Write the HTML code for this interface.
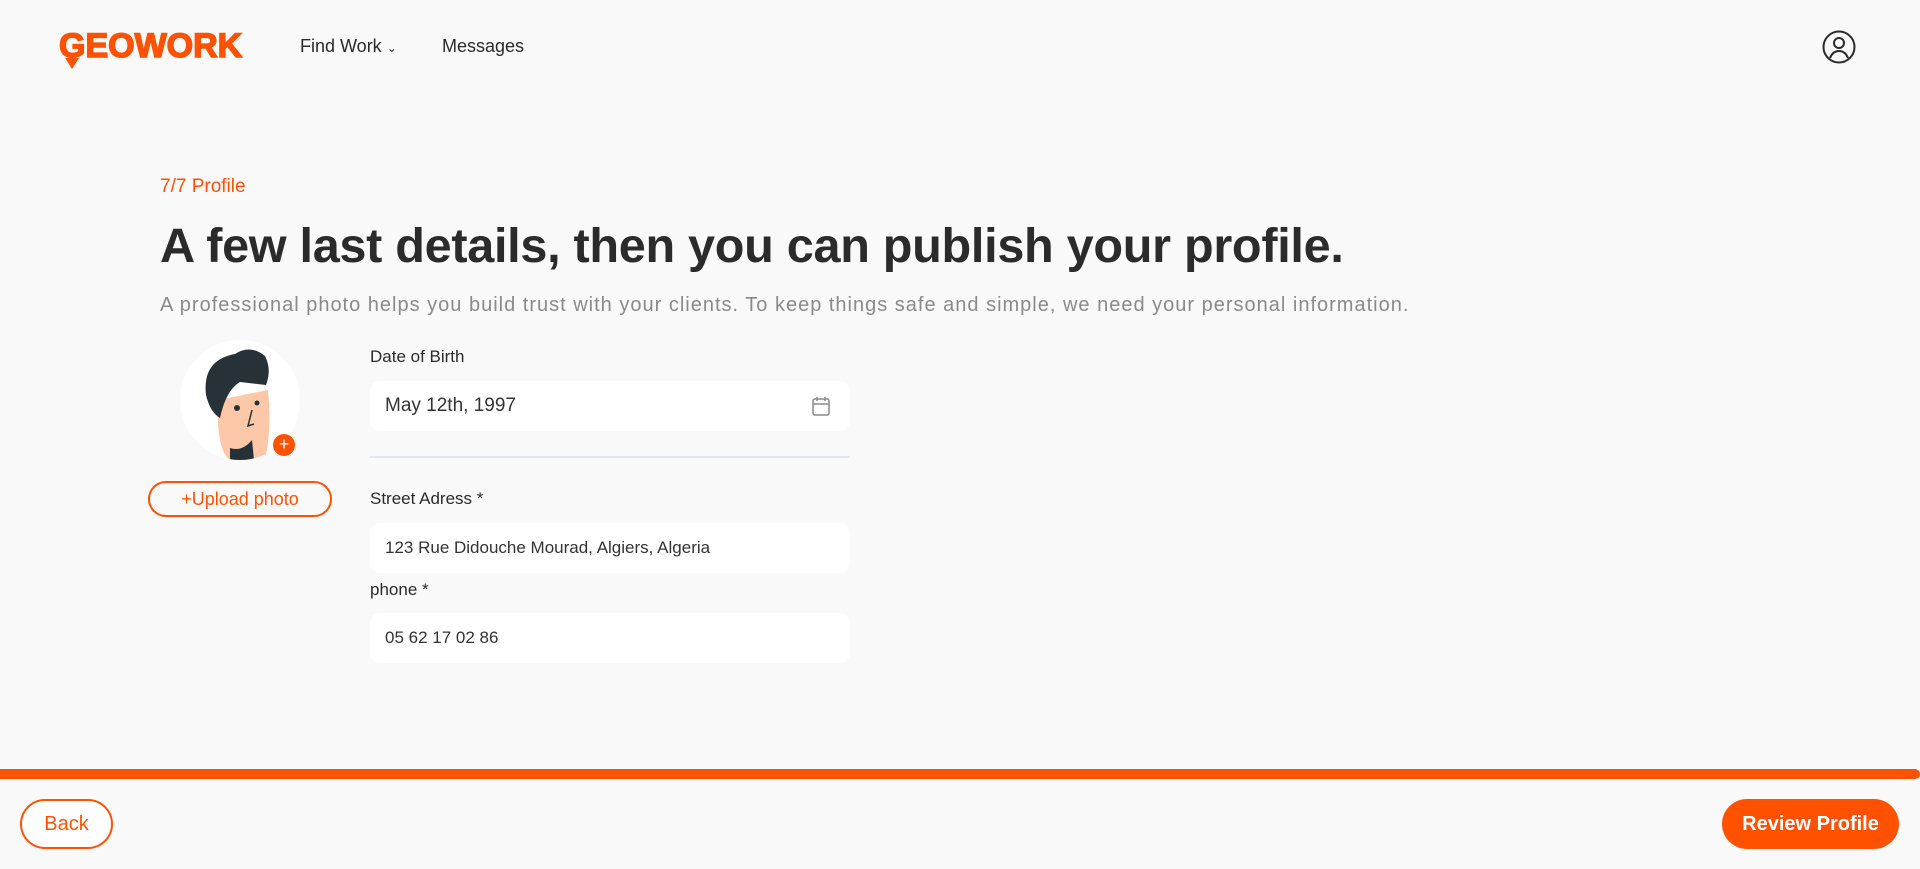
<!DOCTYPE html>
<html><head><meta charset="utf-8"><style>
*{margin:0;padding:0;box-sizing:border-box}
html,body{width:1920px;height:869px;overflow:hidden;background:#f9f9f9;font-family:"Liberation Sans",sans-serif;color:#2b2b2b}
.abs{position:absolute}
.logo{left:59px;top:26px;font-family:"Liberation Sans",sans-serif;font-weight:900;font-size:34px;color:#ff5100;letter-spacing:0;line-height:40px;-webkit-text-stroke:1.5px #ff5100}
.nav{top:36px;font-size:18px;color:#2b2b2b}
.lbl{left:370px;font-size:17px;color:#2b2b2b}
.inp{left:370px;width:480px;height:50px;background:#fff;border-radius:10px;padding-left:15px;line-height:50px;font-size:17px;color:#333}
</style></head><body>
<div class="abs logo">GEOWORK</div>
<div class="abs" style="left:65px;top:58px;width:0;height:0;border-left:7px solid transparent;border-right:7px solid transparent;border-top:11px solid #ff5100"></div>
<div class="abs nav" style="left:300px">Find Work <span style="font-size:12px">&#8964;</span></div>
<div class="abs nav" style="left:442px">Messages</div>
<svg class="abs" style="left:1822px;top:30px" width="34" height="34" viewBox="0 0 34 34" fill="none" stroke="#2b2b2b" stroke-width="2"><circle cx="17" cy="17" r="15.5"/><circle cx="17" cy="13" r="5"/><path d="M8 28c2-5 5-7 9-7s7 2 9 7"/></svg>

<div class="abs" style="left:160px;top:176px;font-size:19px;color:#ff5100">7/7 Profile</div>
<div class="abs" style="left:160px;top:218px;font-size:48.6px;font-weight:bold;color:#2b2b2b;letter-spacing:-0.3px;white-space:nowrap">A few last details, then you can publish your profile.</div>
<div class="abs" style="left:160px;top:294px;font-size:20px;color:#8a8a8a;white-space:nowrap;letter-spacing:1px">A professional photo helps you build trust with your clients. To keep things safe and simple, we need your personal information.</div>

<div class="abs" style="left:180px;top:340px;width:120px;height:120px;border-radius:50%;background:#fff;overflow:hidden">
<svg width="120" height="120" viewBox="0 0 120 120"><path d="M38 60 Q36 110 50 120 L85 120 Q92 90 88 50 Z" fill="#fcc8a8"/><path d="M26 55 Q22 20 55 14 Q70 4 85 16 Q92 30 86 45 L60 42 Q46 50 40 78 Q30 72 26 55Z" fill="#263238"/><path d="M50 108 Q62 112 72 100 L74 120 L50 120Z" fill="#263238"/><circle cx="57" cy="68" r="3" fill="#263238"/><circle cx="77" cy="63" r="2.5" fill="#263238"/><path d="M72 70 L68 86 L74 84" stroke="#263238" stroke-width="1.5" fill="none"/></svg>
</div>
<div class="abs" style="left:273px;top:434px;width:22px;height:22px;border-radius:50%;background:#ff5100;color:#fff;font-size:18px;line-height:21px;text-align:center">+</div>
<div class="abs" style="left:148px;top:481px;width:184px;height:36px;border:2px solid #ff5100;border-radius:18px;color:#ff5100;font-size:18px;line-height:32px;text-align:center">+Upload photo</div>

<div class="abs lbl" style="top:347px">Date of Birth</div>
<div class="abs inp" style="top:381px;font-size:19px">May 12th, 1997
<svg class="abs" style="right:20px;top:15px" width="18" height="20" viewBox="0 0 18 20" fill="none" stroke="#8a8a8a" stroke-width="1.5"><rect x="1" y="3" width="16" height="16" rx="2"/><path d="M1 8h16M5 1v4M13 1v4"/></svg></div>
<div class="abs" style="left:370px;top:456px;width:480px;height:2px;background:#e1e5ec"></div>
<div class="abs lbl" style="top:489px">Street Adress *</div>
<div class="abs inp" style="top:523px">123 Rue Didouche Mourad, Algiers, Algeria</div>
<div class="abs lbl" style="top:580px">phone *</div>
<div class="abs inp" style="top:613px">05 62 17 02 86</div>

<div class="abs" style="left:0;top:769px;width:1920px;height:10px;background:#ff5100;border-radius:0 5px 5px 0"></div>
<div class="abs" style="left:20px;top:799px;width:93px;height:50px;border:2px solid #ff5100;border-radius:25px;background:#fff;color:#ff5100;font-size:20px;line-height:46px;text-align:center">Back</div>
<div class="abs" style="left:1722px;top:799px;width:177px;height:50px;border-radius:25px;background:#ff5100;color:#fff;font-size:20px;font-weight:bold;line-height:50px;text-align:center">Review Profile</div>
</body></html>
